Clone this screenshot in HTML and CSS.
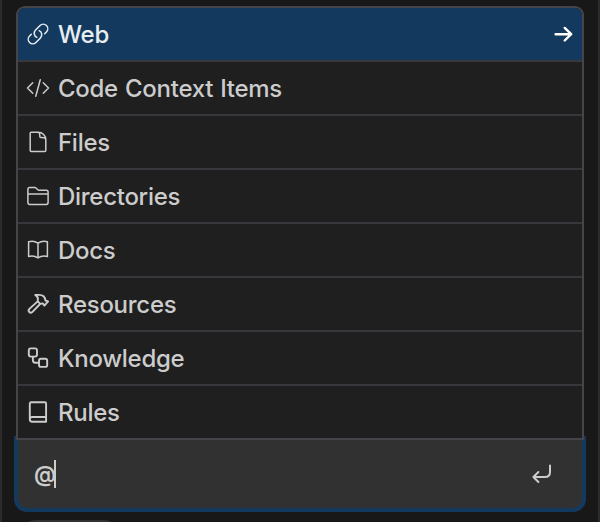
FILE: index.html
```html
<!DOCTYPE html>
<html lang="en">
<head>
<meta charset="utf-8">
<title>Context picker</title>
<link rel="stylesheet" href="styles.css">
</head>
<body>
<main class="panel">
  <ul class="menu">
    <li class="item selected">
      <svg class="icon" viewBox="0 0 24 24"><path d="M13.19 8.688a4.5 4.5 0 0 1 1.242 7.244l-4.5 4.5a4.5 4.5 0 0 1-6.364-6.364l1.757-1.757m13.35-.622 1.757-1.757a4.5 4.5 0 0 0-6.364-6.364l-4.5 4.5a4.5 4.5 0 0 0 1.242 7.244"/></svg>
      <span class="label">Web</span>
      <svg class="arrow" viewBox="0 0 24 24"><path d="M4.6 12.2h15.6M13.7 5.9l6.5 6.3-6.5 6.3"/></svg>
    </li>
    <li class="item">
      <svg class="icon" viewBox="0 0 24 24"><path d="M17.25 6.75 22.5 12l-5.25 5.25m-10.5 0L1.5 12l5.25-5.25m7.5-3-4.5 16.5"/></svg>
      <span class="label">Code Context Items</span>
    </li>
    <li class="item">
      <svg class="icon" viewBox="0 0 24 24"><path d="M4.2 3.2c0-.6.4-1 1-1h7.2c4 0 7.4 3.6 7.4 7.3v11c0 .6-.4 1-1 1H5.2c-.6 0-1-.4-1-1zM12.4 2.2c1.2.7 1.4 1.6 1.4 3v1.2c0 .6.4 1 1 1h1.2c1.7 0 3 .5 3.6 1.6"/></svg>
      <span class="label">Files</span>
    </li>
    <li class="item">
      <svg class="icon" viewBox="0 0 24 24"><path d="M1.9 10h20.2M1.9 18.6V5.3c0-1 .8-1.8 1.8-1.8h5.1c.5 0 .9.2 1.2.5l1.8 1.7c.3.3.7.5 1.2.5h7.3c1 0 1.8.8 1.8 1.8v10.6c0 1-.8 1.8-1.8 1.8H3.7c-1 0-1.8-.8-1.8-1.8z"/></svg>
      <span class="label">Directories</span>
    </li>
    <li class="item">
      <svg class="icon" viewBox="0 0 24 24"><path d="M12 5.1C9.3 3.2 5.6 2.8 2.6 3.7v14.8c3-.8 6.7-.4 9.4 1.4 2.7-1.8 6.4-2.2 9.4-1.4V3.7c-3-.9-6.7-.5-9.4 1.4zm0 0v14.7"/></svg>
      <span class="label">Docs</span>
    </li>
    <li class="item">
      <svg class="icon medium" viewBox="0 0 24 24"><path d="m11.4 9.6-8 7.3c-1 1-.9 2.3-.1 3.1.9.9 2.2 1 3.2-.1l7.6-7.9M9.2 2.9h3.9c3.9 0 6 2.3 6.3 5.6l2.7.9-3.7 4.2-1.6-2.2-2.5.5-2.7-2.6.3-2.2c.1-1.9-.8-3-2.7-4.2z"/></svg>
      <span class="label">Resources</span>
    </li>
    <li class="item">
      <svg class="icon heavy" viewBox="0 0 24 24"><rect x="2.8" y="2.4" width="8.2" height="8.2" rx="2"/><rect x="13" y="12.7" width="8.2" height="8.2" rx="2"/><path d="M6.9 10.6v3.7c0 1.5.8 2.4 2.3 2.4H13"/></svg>
      <span class="label">Knowledge</span>
    </li>
    <li class="item">
      <svg class="icon heavy" viewBox="0 0 24 24"><path d="M3.8 19.3V3.7c0-1 .6-1.5 1.5-1.5h13.5c.8 0 1.3.5 1.3 1.3v18.3H6.2c-1.6 0-2.4-1-2.4-2.5zm0 0c0-1.5.8-2.3 2.4-2.3h13.9"/></svg>
      <span class="label">Rules</span>
    </li>
  </ul>
  <div class="input">
    <span class="typed">@</span><span class="caret"></span>
    <svg class="enter" viewBox="0 0 24 24"><path d="M20 3.6v6.3c0 3.2-1.8 5.1-5 5.1H3.6M8.4 10l-5 5 5 5"/></svg>
  </div>
  <div class="pill"></div>
</main>
</body>
</html>
```

FILE: styles.css
```css
* { box-sizing: border-box; }
body {
  margin: 0;
  background: #181818;
  color: #cccccc;
  font-family: Inter, "Liberation Sans", sans-serif;
}
.panel {
  height: 522px;
  overflow: hidden;
  padding: 6px 12px 0;
  border: solid #2b2b2b;
  border-width: 0 2px;
}
.menu {
  position: relative;
  z-index: 1;
  list-style: none;
  margin: 0 2px;
  padding: 0;
  border: 2px solid #454549;
  border-radius: 9px 9px 0 0;
  background: #1f1f1f;
  overflow: hidden;
}
.item {
  display: flex;
  align-items: center;
  height: 54px;
  padding: 0 8px;
  border-bottom: 2px solid #38383c;
}
.item:last-child { height: 52px; border-bottom: 0; }
.selected { background: #133a5e; color: #e8edf2; }
.icon {
  width: 24px;
  height: 24px;
  flex: none;
  fill: none;
  stroke: currentColor;
  stroke-width: 1.5;
  stroke-linecap: round;
  stroke-linejoin: round;
}
.medium { stroke-width: 1.9; }
.heavy { stroke-width: 1.9; }
.label {
  margin-left: 8px;
  padding-top: 2px;
  font-size: 24px;
  font-weight: 500;
  letter-spacing: -0.28px;
  word-spacing: 1px;
  line-height: 32px;
  white-space: nowrap;
}
.arrow {
  width: 24px;
  height: 24px;
  margin: 0 -1px 0 auto;
  fill: none;
  stroke: #ffffff;
  stroke-width: 2.4;
  stroke-linecap: round;
  stroke-linejoin: round;
}
.input {
  display: flex;
  align-items: center;
  height: 76px;
  margin-top: -4px;
  padding: 4px 28px 0 16px;
  border: 4px solid #133a5e;
  border-top: 0;
  border-radius: 0 0 13px 13px;
  background: #313131;
}
.typed {
  font-size: 22px;
  font-weight: 600;
  line-height: 32px;
  letter-spacing: -1.5px;
}
.caret { width: 2px; height: 28px; background: #cccccc; }
.enter {
  width: 24px;
  height: 24px;
  margin-left: auto;
  fill: none;
  stroke: #cccccc;
  stroke-width: 2;
  stroke-linecap: round;
  stroke-linejoin: round;
}
.pill {
  width: 96px;
  height: 32px;
  margin: 8px 0 0 8px;
  border-radius: 14px;
  background: #313131;
}
```
